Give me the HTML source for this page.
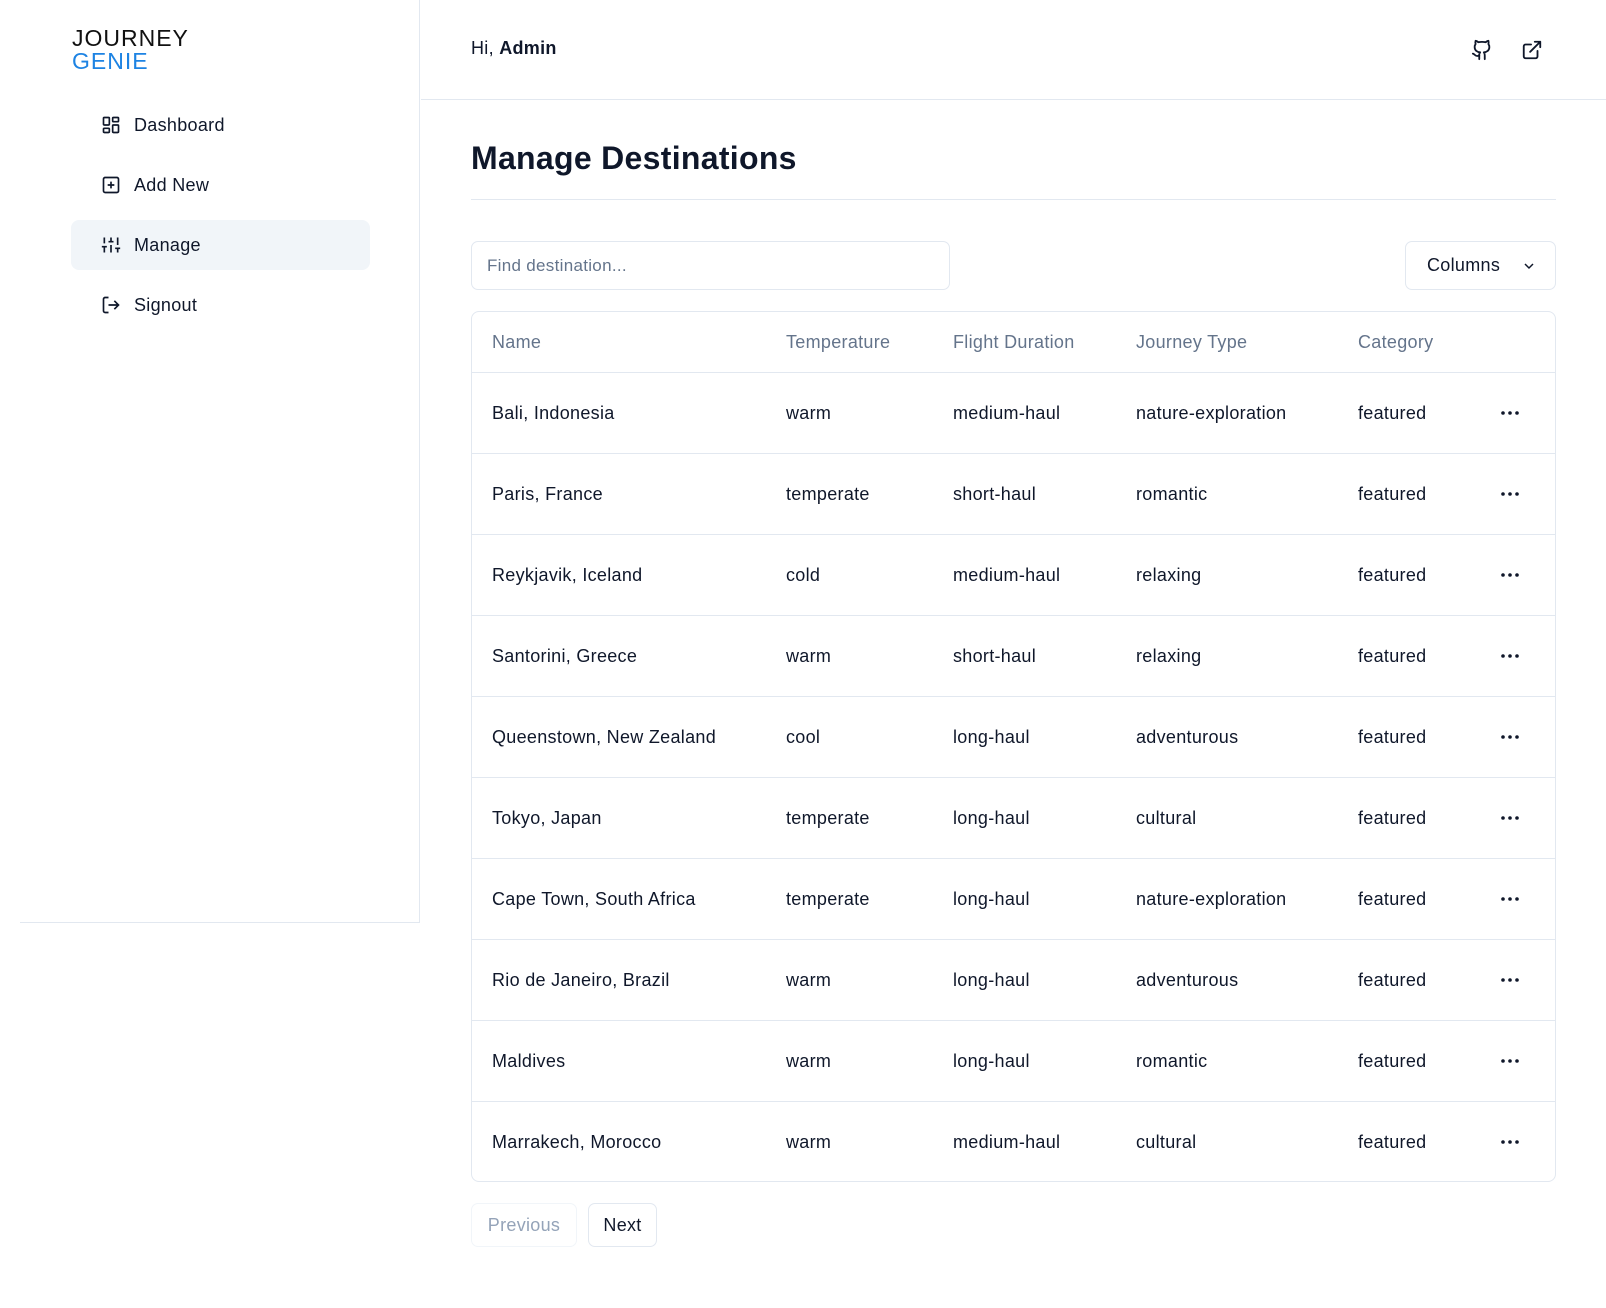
<!DOCTYPE html>
<html><head><meta charset="utf-8"><style>
*{box-sizing:border-box;margin:0;padding:0}
body{width:1606px;height:1308px;background:#fff;font-family:"Liberation Sans",sans-serif;color:#0f172a;position:relative;overflow:hidden;letter-spacing:0.3px}
.abs{position:absolute}
.side{position:absolute;left:20px;top:0;width:400px;height:923px;border-right:1px solid #e2e8f0;border-bottom:1px solid #e2e8f0}
.logo1{left:72px;top:27px;font-size:23px;letter-spacing:1px;color:#111;font-weight:300;line-height:23px}
.logo2{left:72px;top:50px;font-size:23px;letter-spacing:1px;color:#1d83e3;line-height:23px}
.nav{position:absolute;left:71px;width:299px;height:50px;display:flex;align-items:center;padding-left:30px;font-size:18px;border-radius:8px}
.nav svg{width:20px;height:20px;margin-right:13px}
.nav.on{background:#f1f5f9}
.hdr{position:absolute;left:421px;top:0;right:0;height:100px;border-bottom:1px solid #e2e8f0}
.search{left:471px;top:241px;width:479px;height:49px;border:1px solid #e2e8f0;border-radius:7px;padding-left:15px;line-height:47px;font-size:17px;color:#64748b}
.cols{left:1405px;top:241px;width:151px;height:49px;border:1px solid #e2e8f0;border-radius:7px;font-size:18px;line-height:47px;padding-left:21px}
.table{left:471px;top:311px;width:1085px;height:871px;border:1px solid #e2e8f0;border-radius:8px;overflow:hidden}
.row{position:absolute;left:0;width:100%;border-bottom:1px solid #e2e8f0;font-size:18px}
.row span{position:absolute}
.th{height:61px;color:#64748b}
.th span{top:20px}
.td{height:81px}
.td span{top:30px}
.row .dots{left:1028px;top:38px;width:20px;height:4px;line-height:0}
.dots svg{display:block}
.btn{top:1203px;height:44px;border:1px solid #e2e8f0;border-radius:7px;font-size:18px;text-align:center;line-height:42px}
</style></head><body>
<div class="side"></div>
<div class="abs logo1">JOURNEY</div>
<div class="abs logo2">GENIE</div>
<div class="nav" style="top:100px"><svg viewBox="0 0 24 24" fill="none" stroke="#0f172a" stroke-width="2"><rect x="3" y="3" width="7" height="9" rx="1"/><rect x="14" y="3" width="7" height="5" rx="1"/><rect x="14" y="12" width="7" height="9" rx="1"/><rect x="3" y="16" width="7" height="5" rx="1"/></svg>Dashboard</div>
<div class="nav" style="top:160px"><svg viewBox="0 0 24 24" fill="none" stroke="#0f172a" stroke-width="2"><rect x="3" y="3" width="18" height="18" rx="2"/><path d="M12 8v8M8 12h8"/></svg>Add New</div>
<div class="nav on" style="top:220px"><svg viewBox="0 0 24 24" fill="none" stroke="#0f172a" stroke-width="2"><path d="M4 21v-7M4 10V3M12 21v-9M12 8V3M20 21v-5M20 12V3M1 14h6M9 8h6M17 16h6"/></svg>Manage</div>
<div class="nav" style="top:280px"><svg viewBox="0 0 24 24" fill="none" stroke="#0f172a" stroke-width="2"><path d="M9 21H5a2 2 0 0 1-2-2V5a2 2 0 0 1 2-2h4M16 17l5-5-5-5M21 12H9"/></svg>Signout</div>
<div class="hdr"></div>
<div class="abs" style="left:471px;top:38px;font-size:18px">Hi, <b>Admin</b></div>
<svg class="abs" style="left:1471px;top:39px" width="22" height="22" viewBox="0 0 24 24" fill="none" stroke="#0f172a" stroke-width="2" stroke-linecap="round" stroke-linejoin="round"><path d="M15 22v-4a4.8 4.8 0 0 0-1-3.5c3 0 6-2 6-5.5.08-1.25-.27-2.480-1-3.5.28-1.15.28-2.35 0-3.5 0 0-1 0-3 1.5-2.64-.5-5.36-.5-8 0C6 2 5 2 5 2c-.3 1.15-.3 2.35 0 3.5A5.4 5.4 0 0 0 4 9c0 3.5 3 5.5 6 5.5-.39.49-.68 1.05-.85 1.65S8.93 17.38 9 18v4"/><path d="M9 18c-4.510 2-5-2-7-2"/></svg>
<svg class="abs" style="left:1521px;top:39px" width="22" height="22" viewBox="0 0 24 24" fill="none" stroke="#0f172a" stroke-width="2" stroke-linecap="round" stroke-linejoin="round"><path d="M18 13v6a2 2 0 0 1-2 2H5a2 2 0 0 1-2-2V8a2 2 0 0 1 2-2h6M15 3h6v6M10 14 21 3"/></svg>
<div class="abs" style="left:471px;top:140px;font-size:32px;font-weight:bold">Manage Destinations</div>
<div class="abs" style="left:471px;top:199px;width:1085px;height:1px;background:#e2e8f0"></div>
<div class="abs search">Find destination...</div>
<div class="abs cols">Columns<svg style="position:absolute;left:115px;top:16px" width="16" height="16" viewBox="0 0 24 24" fill="none" stroke="#0f172a" stroke-width="2.2"><path d="m6 9 6 6 6-6"/></svg></div>
<div class="abs table">
<div class="row th" style="top:0"><span style="left:20px">Name</span><span style="left:314px">Temperature</span><span style="left:481px">Flight Duration</span><span style="left:664px">Journey Type</span><span style="left:886px">Category</span></div>
<div id="rows"></div>
</div>
<div class="abs btn" style="left:471px;width:106px;color:#94a3b8;border-color:#f1f5f9">Previous</div>
<div class="abs btn" style="left:588px;width:69px">Next</div>
<script>
var d=[["Bali, Indonesia","warm","medium-haul","nature-exploration"],["Paris, France","temperate","short-haul","romantic"],["Reykjavik, Iceland","cold","medium-haul","relaxing"],["Santorini, Greece","warm","short-haul","relaxing"],["Queenstown, New Zealand","cool","long-haul","adventurous"],["Tokyo, Japan","temperate","long-haul","cultural"],["Cape Town, South Africa","temperate","long-haul","nature-exploration"],["Rio de Janeiro, Brazil","warm","long-haul","adventurous"],["Maldives","warm","long-haul","romantic"],["Marrakech, Morocco","warm","medium-haul","cultural"]];
var h="";d.forEach(function(r,i){h+='<div class="row td" style="top:'+(61+i*81)+'px;'+(i==9?'border-bottom:none':'')+'"><span style="left:20px">'+r[0]+'</span><span style="left:314px">'+r[1]+'</span><span style="left:481px">'+r[2]+'</span><span style="left:664px">'+r[3]+'</span><span style="left:886px">featured</span><span class="dots"><svg width="20" height="4"><circle cx="3" cy="2" r="1.8" fill="#0f172a"/><circle cx="10" cy="2" r="1.8" fill="#0f172a"/><circle cx="17" cy="2" r="1.8" fill="#0f172a"/></svg></span></div>'});
document.getElementById("rows").innerHTML=h;
</script>
</body></html>
